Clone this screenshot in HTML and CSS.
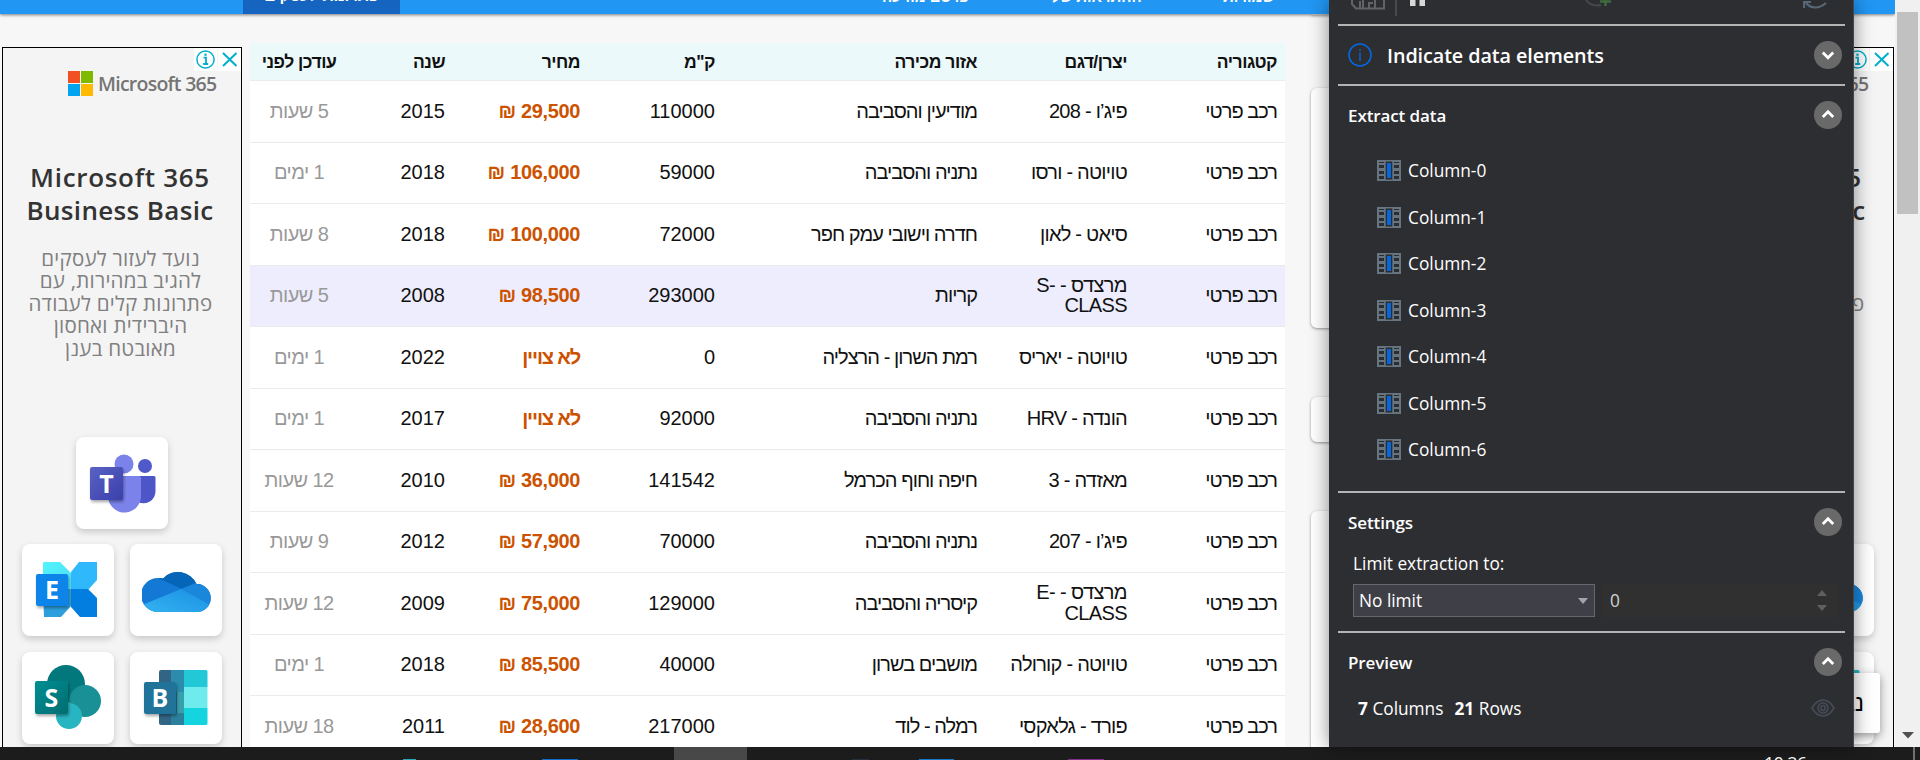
FILE: index.html
```html
<!DOCTYPE html>
<html lang="he">
<head>
<meta charset="utf-8">
<title>Data extraction</title>
<link rel="stylesheet" href="styles.css">
</head>
<body>
<svg class="defs" width="0" height="0" aria-hidden="true">
  <defs>
    <linearGradient id="gT" x1="0" y1="0" x2="1" y2="1"><stop offset="0" stop-color="#5a62c3"/><stop offset="1" stop-color="#3940ab"/></linearGradient>
    <linearGradient id="gS" x1="0" y1="0" x2="1" y2="1"><stop offset="0" stop-color="#058f92"/><stop offset="1" stop-color="#026d71"/></linearGradient>
    <linearGradient id="gC" x1="0" y1="0" x2="1" y2="1"><stop offset="0" stop-color="#50f5fd"/><stop offset="1" stop-color="#4fdcf5"/></linearGradient>
    <linearGradient id="gL" x1="0" y1="1" x2="1" y2="0"><stop offset="0" stop-color="#35b4f2"/><stop offset="1" stop-color="#1a8fe3"/></linearGradient>
    <clipPath id="cloud"><path d="M16 44a17 17 0 0 1 0-34c2 0 3 0 5 .4A20.500 20.500 0 0 1 54.500 16A14 14 0 0 1 55 44z"/></clipPath>
    <filter id="sh" x="-30%" y="-30%" width="170%" height="170%"><feDropShadow dx="1" dy="2" stdDeviation="1.500" flood-opacity=".35"/></filter>
    <symbol id="teams" viewBox="0 0 92 92">
      <circle cx="69" cy="29" r="7" fill="#5059c9"/><path d="M62 39h16a1.500 1.500 0 0 1 1.500 1.500V54a12 12 0 0 1-17.500 11z" fill="#4e55c6"/>
      <circle cx="48" cy="27" r="9.500" fill="#7b83eb"/><path d="M33 39h30a2 2 0 0 1 2 2v17a16.500 16.500 0 0 1-33 2z" fill="#7b83eb"/>
      <rect x="14" y="30" width="33" height="33" rx="2" fill="url(#gT)" filter="url(#sh)"/><text x="30.500" y="55.500" class="glyph">T</text>
    </symbol>
    <symbol id="exchange" viewBox="0 0 92 92">
      <path d="M22 18h16l11 11v16H21V19z" fill="url(#gC)"/><path d="M57 18h18v18L66 46H49V28z" fill="#2fb8fb"/>
      <path d="M21 45h28v17L39 73H22z" fill="#2d9fdc"/><path d="M49 45h17l9 9v19H58L49 63z" fill="#027de0"/>
      <rect x="14" y="30" width="32" height="32" rx="2" fill="#0a84ea" filter="url(#sh)"/><text x="30" y="55" class="glyph">E</text>
    </symbol>
    <symbol id="onedrive" viewBox="0 0 92 92">
      <g transform="translate(12 24)" clip-path="url(#cloud)"><rect width="70" height="46" fill="#1379d4"/>
      <path d="M12 0h48v24l-20-3L16 10z" fill="#0566b8"/><path d="M39 21L56 14h14v30H64z" fill="#1a86dc"/><path d="M0 37L39 21L70 38V46H0z" fill="url(#gL)"/></g>
    </symbol>
    <symbol id="sharepoint" viewBox="0 0 92 92">
      <circle cx="44" cy="32" r="19" fill="#03787c"/><circle cx="63" cy="49" r="16" fill="#189095"/><circle cx="47" cy="64" r="13" fill="#28b5c2"/>
      <rect x="13" y="29" width="33" height="33" rx="2" fill="url(#gS)" filter="url(#sh)"/><text x="29.500" y="55" class="glyph">S</text>
    </symbol>
    <symbol id="bookings" viewBox="0 0 92 92">
      <rect x="29" y="18" width="25" height="55" rx="2" fill="#326584"/><path d="M41 18h13v22H41z" fill="#2b8cad"/><path d="M47 40h7v21h-7z" fill="#36a0ad"/><path d="M41 61h13v12H41z" fill="#2c809b"/>
      <path d="M54 18h22a1.500 1.500 0 0 1 1.500 1.500V35H54z" fill="#22c8d5"/><path d="M54 35h23.500v21H54z" fill="#70ebed"/><path d="M54 56h23.500v16l-1 1H54z" fill="#14d4df"/>
      <rect x="14" y="30" width="32" height="32" rx="2" fill="#217399" filter="url(#sh)"/><text x="30" y="55" class="glyph">B</text>
    </symbol>
    <symbol id="info" viewBox="0 0 23 23"><circle cx="11.500" cy="11.500" r="8.600" fill="none" stroke="#00aecd" stroke-width="1.500"/><path d="M9.500 9.700h2.500v6.300M9.200 16h5" fill="none" stroke="#00aecd" stroke-width="1.800"/><rect x="10.400" y="5.600" width="2.200" height="2.200" fill="#00aecd"/></symbol>
    <symbol id="close" viewBox="0 0 23 23"><path d="M5 5l13.500 13M18.500 5L5 18" stroke="#00aecd" stroke-width="2" fill="none"/></symbol>
    <symbol id="grid" viewBox="0 0 24 21"><path d="M0 0h24v21H0z" fill="#66757f"/><path d="M2 2h5v1H2zM2 5h5v3H2zM2 11h5v3H2zM2 16h5v3H2zM17 2h5v1h-5zM17 5h5v3h-5zM17 11h5v3h-5zM17 16h5v3h-5zM8.700 1.500h6.600v18H8.700z" fill="#2b2d31"/><path d="M10 3h4v15h-4z" fill="#0567dd"/></symbol>
    <symbol id="up" viewBox="0 0 28 28"><circle cx="14" cy="14" r="14" fill="#696969"/><path d="M8.800 16L14 10.800l5.200 5.200" fill="none" stroke="#fff" stroke-width="2.800"/></symbol>
    <symbol id="down" viewBox="0 0 28 28"><circle cx="14" cy="14" r="14" fill="#696969"/><path d="M8.800 11.500L14 16.700l5.200-5.200" fill="none" stroke="#fff" stroke-width="2.800"/></symbol>
  </defs>
</svg>

<div class="screen">
  <div class="browser">
    <div class="page">
      <nav class="nav">
        <div class="nav-tab">פתרונות לעסקים</div>
        <div class="nav-links">
          <span class="nav-a">פרסם מודעה</span><span class="nav-b">ההתראות שלי</span><span class="nav-c">שמורות</span>
        </div>
      </nav>
      <div class="content">
        <aside class="ad">
          <div class="ad-tags"><span><svg><use href="#info"/></svg></span><span><svg><use href="#close"/></svg></span></div>
          <div class="ad-logo"><div class="squares"><i class="red"></i><i class="green"></i><i class="blue"></i><i class="yellow"></i></div><span>Microsoft 365</span></div>
          <h2><span>Microsoft 365</span><br>Business Basic</h2>
          <p>נועד לעזור לעסקים<br>להגיב במהירות, עם<br>פתרונות קלים לעבודה<br>היברידית ואחסון<br>מאובטח בענן</p>
          <div class="tiles"><svg class="tile first"><use href="#teams"/></svg><svg class="tile"><use href="#exchange"/></svg><svg class="tile"><use href="#onedrive"/></svg><svg class="tile"><use href="#sharepoint"/></svg><svg class="tile"><use href="#bookings"/></svg></div>
        </aside>

        <main class="listing" dir="rtl">
          <div class="row head"><div>קטגוריה</div><div>יצרן/דגם</div><div>אזור מכירה</div><div>ק"מ</div><div>מחיר</div><div>שנה</div><div>עודכן לפני</div></div>
          <div class="row"><div>רכב פרטי</div><div>פיג’ו - 208</div><div>מודיעין והסביבה</div><div>110000</div><div>29,500 ₪</div><div>2015</div><div>5 שעות</div></div>
          <div class="row"><div>רכב פרטי</div><div>טויוטה - ורסו</div><div>נתניה והסביבה</div><div>59000</div><div>106,000 ₪</div><div>2018</div><div>1 ימים</div></div>
          <div class="row"><div>רכב פרטי</div><div>סיאט - לאון</div><div>חדרה וישובי עמק חפר</div><div>72000</div><div>100,000 ₪</div><div>2018</div><div>8 שעות</div></div>
          <div class="row active"><div>רכב פרטי</div><div class="two-line">מרצדס - S-CLASS</div><div>קריות</div><div>293000</div><div>98,500 ₪</div><div>2008</div><div>5 שעות</div></div>
          <div class="row"><div>רכב פרטי</div><div>טויוטה - יאריס</div><div>רמת השרון - הרצליה</div><div>0</div><div class="unpriced">לא צויין</div><div>2022</div><div>1 ימים</div></div>
          <div class="row"><div>רכב פרטי</div><div>הונדה - HRV</div><div>נתניה והסביבה</div><div>92000</div><div class="unpriced">לא צויין</div><div>2017</div><div>1 ימים</div></div>
          <div class="row"><div>רכב פרטי</div><div>מאזדה - 3</div><div>חיפה וחוף הכרמל</div><div>141542</div><div>36,000 ₪</div><div>2010</div><div>12 שעות</div></div>
          <div class="row"><div>רכב פרטי</div><div>פיג’ו - 207</div><div>נתניה והסביבה</div><div>70000</div><div>57,900 ₪</div><div>2012</div><div>9 שעות</div></div>
          <div class="row"><div>רכב פרטי</div><div class="two-line">מרצדס - E-CLASS</div><div>קיסריה והסביבה</div><div>129000</div><div>75,000 ₪</div><div>2009</div><div>12 שעות</div></div>
          <div class="row"><div>רכב פרטי</div><div>טויוטה - קורולה</div><div>מושבים בשרון</div><div>40000</div><div>85,500 ₪</div><div>2018</div><div>1 ימים</div></div>
          <div class="row"><div>רכב פרטי</div><div>פורד - גלאקסי</div><div>רמלה - לוד</div><div>217000</div><div>28,600 ₪</div><div>2011</div><div>18 שעות</div></div>
        </main>

        <div class="side"><div class="card c1"></div><div class="card c2"></div><div class="card c3"></div><div class="card c4"></div></div>

        <aside class="ad">
          <div class="ad-tags"><span><svg><use href="#info"/></svg></span><span><svg><use href="#close"/></svg></span></div>
          <div class="ad-logo"><div class="squares"><i class="red"></i><i class="green"></i><i class="blue"></i><i class="yellow"></i></div><span>Microsoft 365</span></div>
          <h2><span>Microsoft 365</span><br>Business Basic</h2>
          <p>נועד לעזור לעסקים<br>להגיב במהירות, עם<br>פתרונות קלים לעבודה<br>היברידית ואחסון<br>מאובטח בענן</p>
          <div class="tiles"><svg class="tile first"><use href="#teams"/></svg><svg class="tile"><use href="#exchange"/></svg><svg class="tile"><use href="#onedrive"/></svg><svg class="tile"><use href="#sharepoint"/></svg><svg class="tile"><use href="#bookings"/></svg></div>
        </aside>
      </div>
      <div class="popup" dir="rtl">נגישות</div>
    </div>
    <div class="scrollbar"><div class="thumb"></div><svg width="12" height="7"><path d="M0 0h12L6 6.500z" fill="#505050"/></svg></div>
  </div>

  <section class="panel">
    <div class="tools">
      <svg class="t-save" width="34" height="10"><path d="M1 0v4l4 4.500h28V0M12 8V0M9 8V1M18 8V3h4M24 8V0" fill="none" stroke="#626367" stroke-width="2"/></svg>
      <i class="t-sep"></i>
      <svg class="t-pause" width="15" height="7"><path d="M0 0h5.500v6H0zM9.500 0H15v6H9.500z" fill="#d8d8d8"/></svg>
      <svg class="t-add" width="26" height="8"><path d="M1 0c3 4 8 6.500 15 5" fill="none" stroke="#46484c" stroke-width="2"/><path d="M15 1.500h11M20.500 0v6" stroke="#3f6b3c" stroke-width="2.500"/></svg>
      <svg class="t-sync" width="24" height="9"><path d="M1 8V2h7M3 3c5 6 13 6 20 0" fill="none" stroke="#586775" stroke-width="2.200"/></svg>
    </div>
    <div class="indicate">
      <svg class="i-info" width="24" height="24"><circle cx="12" cy="12" r="11" fill="none" stroke="#0567dd" stroke-width="1.600"/><path d="M12 9.500V18M12 6v1.800" stroke="#0567dd" stroke-width="1.400"/></svg>
      <h1>Indicate data elements</h1><svg class="chev"><use href="#down"/></svg>
    </div>
    <div class="extract">
      <div class="sec-head"><h3 class="w-extract">Extract data</h3><svg class="chev"><use href="#up"/></svg></div>
      <ul>
        <li><svg><use href="#grid"/></svg>Column-0</li><li><svg><use href="#grid"/></svg>Column-1</li><li><svg><use href="#grid"/></svg>Column-2</li><li><svg><use href="#grid"/></svg>Column-3</li><li><svg><use href="#grid"/></svg>Column-4</li><li><svg><use href="#grid"/></svg>Column-5</li><li><svg><use href="#grid"/></svg>Column-6</li>
      </ul>
    </div>
    <div class="settings">
      <div class="sec-head"><h3>Settings</h3><svg class="chev"><use href="#up"/></svg></div>
      <div class="limit">Limit extraction to:</div>
      <div class="fields">
        <div class="select"><span>No limit</span><svg width="10" height="6"><path d="M0 0h10L5 6z" fill="#a5a5a5"/></svg></div>
        <div class="number"><span>0</span><svg width="10" height="21"><path d="M0 6h10L5 0zM0 15h10l-5 6z" fill="#5f5f60"/></svg></div>
      </div>
    </div>
    <div class="preview">
      <div class="sec-head"><h3>Preview</h3><svg class="chev"><use href="#up"/></svg></div>
      <div class="stats"><span><b>7</b> Columns</span><span><b>21</b> Rows</span>
        <svg width="24" height="18" fill="none" stroke="#454b54" stroke-width="1.700"><path d="M1 9C7-1.500 17-1.500 23 9C17 19.500 7 19.500 1 9z"/><circle cx="12" cy="9" r="5"/><ellipse cx="12" cy="9" rx="2" ry="2.500"/></svg></div>
    </div>
  </section>

  <footer class="taskbar"><i class="k1"></i><i class="k2"></i><i class="k3"></i><i class="k4"></i><i class="k5"></i><i class="k6"></i><span>10:26</span><i class="k7"></i></footer>
</div>
</body>
</html>
```
FILE: styles.css
```css
* { box-sizing: border-box; }
body { margin: 0; font-family: "Liberation Sans", Arial, sans-serif; }
h1, h2, h3, p, ul { margin: 0; padding: 0; }
.defs { position: absolute; }
.screen { position: relative; width: 1920px; height: 760px; overflow: hidden; background: #f7f7f7; }
.browser { display: flex; height: 747px; overflow: hidden; }
.page { position: relative; width: 1895px; height: 747px; overflow: hidden; }

/* site navigation, scrolled almost out of view */
.nav { position: relative; z-index: 1; display: flex; align-items: flex-start; height: 14px; background: #2196f3; box-shadow: 0 1px 3px rgba(0,0,0,.5); color: #fff; font-weight: bold; padding-left: 243px; white-space: nowrap; }
.nav-tab { width: 157px; height: 27px; margin-top: -13px; background: #1565c0; text-align: center; font-size: 16px; line-height: 18px; letter-spacing: -.4px; }
.nav-tab, .nav-links { flex: none; }
.nav-links { display: flex; padding-left: 482px; font-size: 15px; line-height: 18px; margin-top: -12px; }
.nav-a { width: 83px; margin-right: 82px; text-align: center; }
.nav-b { width: 85px; margin-right: 91px; text-align: center; }
.nav-c { width: 50px; text-align: center; }
.nav { clip-path: inset(0 0 -6px 0); }
.nav-tab { clip-path: inset(0); }

.content { display: flex; align-items: flex-start; height: 733px; }

/* advertisement */
.ad { flex: none; width: 240px; height: 720px; margin: 33px 0 0 2px; border: 1px solid #000; background: #f4f4f4; text-align: center; font-family: "Open Sans", "Noto Sans", sans-serif; }
.ad-tags { display: flex; justify-content: flex-end; gap: 1px; height: 23px; }
.ad-tags span { width: 23px; height: 23px; background: #fff; }
.ad-tags svg { display: block; width: 23px; height: 23px; }
.ad-logo { display: flex; align-items: center; gap: 5px; height: 25px; padding-left: 65px; font-size: 19.5px; font-weight: 600; letter-spacing: -.75px; color: #757575; white-space: nowrap; }
.squares { display: grid; grid-template-columns: 12px 12px; grid-auto-rows: 12px; gap: 1px; }
.red { background: #f25022; } .green { background: #7fba00; } .blue { background: #00a4ef; } .yellow { background: #ffb900; }
.ad h2 { margin: 65px 4px 0 0; font-size: 26px; line-height: 32.5px; font-weight: 600; color: #333; letter-spacing: .35px; white-space: nowrap; }
.ad h2 span { letter-spacing: .7px; }
.ad p { direction: rtl; margin: 21px 3px 0 0; height: 112px; font-size: 20.5px; letter-spacing: .25px; line-height: 22.4px; color: #808080; white-space: nowrap; }
.tiles { display: grid; grid-template-columns: 92px 92px; column-gap: 16px; row-gap: 15.5px; margin: 77.5px 0 0 19px; }
.tile { width: 92px; height: 92px; background: #fff; border-radius: 8px; box-shadow: 0 3px 7px rgba(0,0,0,.18); }
.tile.first { grid-column: 1 / 3; justify-self: center; }
.glyph { font: bold 25px "Open Sans", sans-serif; fill: #fff; text-anchor: middle; }

/* vehicle table */
.listing { flex: none; width: 1035px; margin: 29px 0 0 8px; background: #fff; font-size: 20px; line-height: 20.5px; color: #111; }
.row { display: grid; grid-template-columns: 150px 150px 262px 135px 135px 105px 98px; align-items: center; height: 61.5px; border-bottom: 1px solid #ebebeb; }
.row > div { padding: 0 8px 1px; }
.row > div:nth-child(1), .row > div:nth-child(3) { letter-spacing: -.95px; }
.row > div:nth-child(2) { letter-spacing: -.75px; }
.row > div.two-line { padding-left: 12px; letter-spacing: -.6px; }
.row > div:nth-child(5) { color: #cc5200; font-weight: bold; letter-spacing: -.35px; }
.row > div.unpriced:nth-child(5) { letter-spacing: -1.15px; }
.row > div:last-child { padding: 0 0 1px; text-align: center; color: #999; letter-spacing: -.6px; }
.row.head { height: 38px; background: #ecf9fb; font-size: 17.5px; font-weight: bold; }
.row.head > div:nth-child(n) { padding-top: 1px; padding-bottom: 0; color: #111; letter-spacing: -.5px; }
.row.active { background: #eeedfd; }

.side { flex: none; width: 343px; margin-left: 26px; }
.card { background: #fff; border-radius: 6px; box-shadow: 0 1px 3px rgba(0,0,0,.4); }
.c1 { height: 1px; } .c2 { height: 240px; margin-top: 73px; } .c3 { height: 45px; margin-top: 69px; } .c4 { height: 260px; margin-top: 69px; }
.side + .ad { margin-left: 0; }

.popup { position: absolute; left: 1720px; top: 673px; width: 160px; height: 60px; padding: 18px 16px; background: #fff; border-radius: 3px; box-shadow: 0 3px 10px rgba(0,0,0,.4); font-size: 23px; line-height: 24px; color: #000; }

.scrollbar { display: flex; flex-direction: column; justify-content: space-between; align-items: center; width: 25px; padding: 12px 1px 8px 1px; background: #f0f0f0; }
.thumb { width: 21px; height: 202px; background: #c1c1c1; }

/* extraction wizard window */
.panel { position: absolute; z-index: 2; left: 1329px; top: 0; width: 525px; height: 747px; padding: 0 8px 0 9px; background: #2d2e32; border-right: 1px solid #46474a; box-shadow: 0 0 18px rgba(0,0,0,.45); color: #fff; font-family: "Open Sans", "Noto Sans", sans-serif; font-size: 17.3px; white-space: nowrap; }
.tools { display: flex; align-items: flex-start; height: 24px; padding-left: 13px; }
.t-sep { width: 2px; height: 16px; margin: 0 13px 0 10px; background: #494a4e; }
.t-add { margin-left: 160px; }
.t-sync { margin-left: 192px; }
.indicate, .extract, .settings, .preview { border-top: 2px solid #b4b4b4; }
.indicate { display: flex; align-items: center; height: 60px; padding: 0 3px 0 10px; }
.indicate h1 { margin-left: 15px; font-size: 19.8px; font-weight: 600; letter-spacing: -.1px; }
.chev { width: 28px; height: 28px; margin-left: auto; }
.sec-head { display: flex; align-items: center; height: 28px; padding: 0 3px 0 10px; }
.sec-head h3 { font-size: 17px; font-weight: 600; letter-spacing: -.1px; }
.extract { height: 407px; padding-top: 15px; }
.extract ul { margin: 18px 0 0 39px; list-style: none; }
.extract li { display: flex; align-items: center; gap: 7px; height: 46.5px; padding-top: 1px; }
.extract li svg { width: 24px; height: 21px; }
.settings { height: 140px; padding-top: 15px; }
.sec-head h3 { padding-top: 1px; }
.limit { height: 24px; margin: 16px 0 8px 15px; line-height: 24px; }
.fields { display: flex; gap: 7px; margin-left: 15px; }
.select, .number { display: flex; align-items: center; justify-content: space-between; height: 33px; }
.select { width: 242px; padding: 0 6px 0 5px; background: #3f4047; border: 1px solid #66676a; }
.number { width: 236px; padding: 0 11px 0 8px; background: #303030; color: #d2d2d2; }
.preview { padding-top: 15px; }
.stats { display: flex; align-items: center; gap: 11px; height: 30px; margin: 17px 10px 0 20px; }
.stats svg { margin-left: auto; }

/* system taskbar */
.taskbar { display: flex; height: 13px; background: #1c1c1c; overflow: hidden; align-items: flex-end; }
.taskbar i { flex: none; height: 1px; }
.k1 { width: 13px; margin-left: 403px; background: #28a9b8; }
.k2 { width: 36px; margin-left: 126px; background: #0d6dcf; }
.taskbar .k3 { width: 73px; height: 13px; margin-left: 96px; background: #484848; }
.k4 { width: 17px; margin-left: 105px; background: #223040; }
.k5 { width: 35px; margin-left: 50px; background: #1479c8; }
.k6 { width: 36px; margin-left: 114px; background: #80308a; }
.taskbar span { flex: none; align-self: flex-start; width: 44px; margin-left: 660px; padding-top: 5px; font: 18px/22px "Open Sans", sans-serif; letter-spacing: -.7px; color: #fff; }
.taskbar .k7 { width: 2px; height: 13px; margin-left: 105px; background: #707070; }
```
